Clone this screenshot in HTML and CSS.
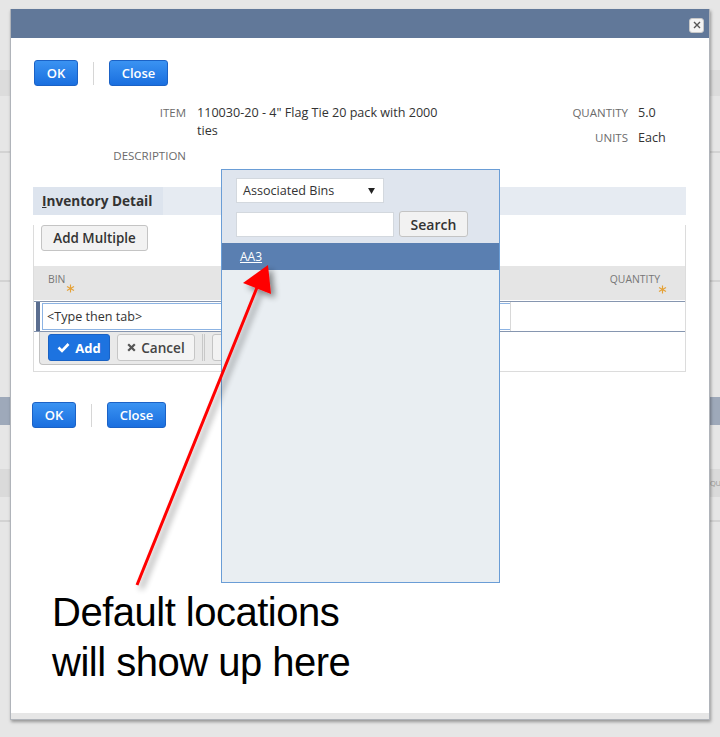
FILE: index.html
```html
<!DOCTYPE html>
<html>
<head>
<meta charset="utf-8">
<title>Inventory Detail</title>
<link rel="stylesheet" href="styles.css">
</head>
<body>
<div class="page">
  <div class="pg-gap h70"></div>
  <div class="pg-band soft h26"></div>
  <div class="pg-gap h55"></div>
  <div class="pg-line"></div>
  <div class="pg-gap h127"></div>
  <div class="pg-line"></div>
  <div class="pg-gap h115"></div>
  <div class="pg-band dark h28"></div>
  <div class="pg-gap h44"></div>
  <div class="pg-band mid h28"><span class="pg-text">QU</span></div>
  <div class="pg-gap h23"></div>
  <div class="pg-line"></div>
</div>

<div class="dialog">
  <div class="dlg-head">
    <span class="dlg-x"><svg width="10" height="10" viewBox="0 0 10 10"><path d="M2 2 L8 8 M8 2 L2 8" stroke="#555" stroke-width="1.4" fill="none"/></svg></span>
  </div>
  <div class="dlg-body">
    <div class="btn-row">
      <button class="btn-blue ok">OK</button>
      <span class="vsep"></span>
      <button class="btn-blue close">Close</button>
    </div>

    <div class="fields">
      <div class="fgroup fleft">
        <span class="lbl">ITEM</span>
        <span class="val">110030-20 - 4" Flag Tie 20 pack with 2000 ties</span>
        <span class="lbl">DESCRIPTION</span>
        <span class="val"></span>
      </div>
      <div class="fgroup fright">
        <span class="lbl">QUANTITY</span>
        <span class="val">5.0</span>
        <span class="lbl">UNITS</span>
        <span class="val">Each</span>
      </div>
    </div>

    <div class="inv">
      <div class="tabs"><div class="tab"><span class="ul">I</span>nventory Detail</div></div>
      <div class="panel">
        <button class="btn-grey addmult">Add Multiple</button>
        <div class="thead">
          <div class="th">BIN<span class="req"><svg width="9" height="9" viewBox="0 0 10 10"><path d="M5 0.5 V9.5 M1.1 2.75 L8.9 7.25 M8.9 2.75 L1.1 7.25" stroke="#e5a238" stroke-width="1.3"/></svg></span></div>
          <div class="th th-qty">QUANTITY<span class="req"><svg width="9" height="9" viewBox="0 0 10 10"><path d="M5 0.5 V9.5 M1.1 2.75 L8.9 7.25 M8.9 2.75 L1.1 7.25" stroke="#e5a238" stroke-width="1.3"/></svg></span></div>
        </div>
        <div class="trow">
          <div class="marker"></div>
          <div class="cell-bin"><div class="bin-input">&lt;Type then tab&gt;</div></div>
          <div class="cell-qty"></div>
        </div>
        <div class="actions">
          <button class="btn-add"><svg width="13" height="11" viewBox="0 0 13 11"><path d="M1.5 5.5 L5 9 L11.5 2" stroke="#fff" stroke-width="2.6" fill="none"/></svg>Add</button>
          <button class="btn-cancel"><svg width="9" height="9" viewBox="0 0 9 9"><path d="M1.2 1.2 L7.8 7.8 M7.8 1.2 L1.2 7.8" stroke="#555" stroke-width="2.2"/></svg>Cancel</button>
          <span class="asep"></span>
          <button class="btn-grey more">Remove</button>
        </div>
      </div>
    </div>

    <div class="btn-row bottom">
      <button class="btn-blue ok">OK</button>
      <span class="vsep"></span>
      <button class="btn-blue close">Close</button>
    </div>
  </div>
  <div class="dlg-foot"></div>

  <div class="popup">
    <div class="pop-top">
      <div class="pop-select"><span>Associated Bins</span><svg width="7" height="6" viewBox="0 0 8 7"><path d="M0 0 H8 L4 7 Z" fill="#222"/></svg></div>
      <div class="pop-search">
        <div class="pop-input"></div>
        <button class="btn-grey search">Search</button>
      </div>
    </div>
    <div class="pop-item"><span>AA3</span></div>
  </div>

  <div class="note">Default locations<br>will show up here</div>
</div>

<svg class="arrow" width="720" height="737" viewBox="0 0 720 737">
  <defs>
    <filter id="sh" x="-50%" y="-50%" width="200%" height="200%">
      <feGaussianBlur in="SourceAlpha" stdDeviation="3"/>
      <feOffset dx="4" dy="4" result="b"/>
      <feComponentTransfer><feFuncA type="linear" slope="0.45"/></feComponentTransfer>
      <feMerge><feMergeNode/><feMergeNode in="SourceGraphic"/></feMerge>
    </filter>
  </defs>
  <g filter="url(#sh)">
    <line x1="137" y1="585" x2="258" y2="285" stroke="#ff0000" stroke-width="3"/>
    <polygon points="268,265 243,283 271,294" fill="#ff0000"/>
  </g>
</svg>
</body>
</html>
```

FILE: styles.css
```css
* { box-sizing: border-box; }
html, body { margin: 0; padding: 0; }
body {
  width: 720px;
  height: 737px;
  overflow: hidden;
  position: relative;
  background: #e6e6e6;
  font-family: "Open Sans", "Noto Sans", sans-serif;
  color: #333;
}
button { font-family: inherit; cursor: pointer; }

/* page behind the dialog */
.page { display: flex; flex-direction: column; }
.pg-gap.h70 { height: 70px; }
.pg-gap.h55 { height: 55px; }
.pg-gap.h127 { height: 127px; }
.pg-gap.h115 { height: 115px; }
.pg-gap.h44 { height: 44px; }
.pg-gap.h23 { height: 23px; }
.pg-band.h26 { height: 26px; }
.pg-band.h28 { height: 28px; }
.pg-band.soft { background: #dcdcdc; }
.pg-band.dark { background: #9ea9ba; }
.pg-band.mid { background: #dadada; padding-left: 710px; overflow: hidden; white-space: nowrap; }
.pg-text { font-size: 7.5px; letter-spacing: -0.4px; color: #999; line-height: 28px; }
.pg-line { height: 2px; background: #d3d3d3; }

/* dialog */
.dialog {
  position: absolute;
  left: 10px;
  top: 9px;
  width: 700px;
  height: 711px;
  background: #fff;
  border: 1px solid #b0b4ba;
  border-top: none;
  box-shadow: 1px 2px 3px rgba(0,0,0,0.35);
  display: flex;
  flex-direction: column;
}
.dlg-head {
  height: 29px;
  background: #617899;
  display: flex;
  justify-content: flex-end;
  align-items: center;
  padding-right: 5px;
  padding-top: 3px;
}
.dlg-x {
  width: 15px;
  height: 15px;
  background: #f4f4f4;
  border: 1px solid #c8c8c8;
  border-radius: 3px;
  display: flex;
  align-items: center;
  justify-content: center;
}
.dlg-body { flex: 1; padding-top: 22px; }
.dlg-foot { height: 6px; background: #e6e6e6; }

.btn-row { display: flex; align-items: center; padding-left: 23px; }
.btn-row.bottom { padding-left: 21px; margin-top: 30px; }
.btn-blue {
  height: 26px;
  border: 1px solid #1b62c6;
  border-radius: 3px;
  background: linear-gradient(#3a93f2, #1a6fdf);
  color: #fff;
  font-weight: 600;
  font-size: 13px;
  padding: 0;
}
.btn-blue.ok { width: 44px; }
.btn-blue.close { width: 59px; }
.vsep { width: 1px; height: 23px; background: #d6d6d6; margin: 0 15px; }

/* fields */
.fields { display: flex; margin-top: 18px; line-height: 18px; }
.fgroup { display: grid; row-gap: 7px; column-gap: 11px; align-content: start; }
.fleft { grid-template-columns: 175px 250px; }
.fright { grid-template-columns: 70px 60px; column-gap: 10px; margin-left: 111px; }
.lbl { text-align: right; color: #6b6b6b; font-size: 11.5px; }
.val { color: #333; min-height: 18px; font-size: 12.6px; }

/* inventory detail */
.inv { margin-left: 22px; width: 653px; margin-top: 22px; }
.tabs { height: 28px; background: #e6ebf2; display: flex; }
.tab {
  width: 130px;
  background: #dde4ee;
  font-weight: 700;
  font-size: 13.6px;
  line-height: 28px;
  padding-left: 9px;
  color: #333;
}
.ul { text-decoration: underline; }
.panel {
  border: 1px solid #dcdcdc;
  border-top: none;
  padding-bottom: 6px;
}
.btn-grey {
  background: #f2f2f2;
  border: 1px solid #c4c4c4;
  border-radius: 3px;
  color: #333;
  font-weight: 600;
  font-size: 14px;
  padding: 0;
}
.addmult { display: block; width: 107px; height: 26px; margin: 10px 0 0 7px; font-size: 13.4px; }
.thead {
  margin-top: 15px;
  height: 34px;
  background: #e5e5e5;
  display: flex;
  justify-content: space-between;
  padding: 7px 25px 0 14px;
}
.th { font-size: 10.4px; color: #777; position: relative; line-height: 13px; }
.req { position: absolute; right: -10px; top: 11px; line-height: 0; }
.th-qty .req { right: -7px; top: 12px; }
.trow {
  height: 31px;
  margin-top: 1px;
  border-top: 1px solid #8696b0;
  border-bottom: 1px solid #8696b0;
  background: #fff;
  display: flex;
}
.marker { width: 4px; margin-left: 2px; background: #5a6d8f; }
.cell-bin { width: 470px; padding: 1px 0 0 2px; }
.bin-input {
  height: 27px;
  border: 1px solid #8cb3e3;
  border-right: none;
  font-size: 12.6px;
  line-height: 25px;
  padding-left: 4px;
  color: #333;
}
.cell-qty { flex: 1; border-left: 1px solid #d8d8d8; }
.actions {
  margin-left: 5px;
  width: 300px;
  height: 33px;
  background: #e9e9e9;
  border: 1px solid #c2c2c2;
  border-top: none;
  border-right: none;
  border-bottom-left-radius: 4px;
  display: flex;
  align-items: flex-start;
  padding: 2px 0 0 8px;
  gap: 7px;
}
.btn-add {
  width: 62px;
  height: 27px;
  background: #1d73e0;
  border: 1px solid #1a62c4;
  border-radius: 3px;
  color: #fff;
  font-weight: 700;
  font-size: 13px;
  display: flex;
  align-items: center;
  justify-content: center;
  gap: 5px;
  padding: 0;
}
.btn-cancel {
  width: 78px;
  height: 27px;
  background: #f4f4f4;
  border: 1px solid #c6c6c6;
  border-radius: 3px;
  color: #444;
  font-weight: 600;
  font-size: 13.6px;
  display: flex;
  align-items: center;
  justify-content: center;
  gap: 5px;
  padding: 0;
}
.asep { width: 3px; height: 27px; border-left: 1px solid #c8c8c8; border-right: 1px solid #c8c8c8; }
.more { width: 70px; height: 27px; font-size: 13px; }

/* popup */
.popup {
  position: absolute;
  left: 210px;
  top: 160px;
  width: 279px;
  height: 414px;
  background: #e9eef2;
  border: 1px solid #6a9dd6;
}
.pop-top { background: #dfe5ee; padding: 8px 0 6px 14px; }
.pop-select {
  width: 148px;
  height: 25px;
  background: #fff;
  border: 1px solid #d3d8de;
  display: flex;
  align-items: center;
  justify-content: space-between;
  padding: 0 8px 0 6px;
  font-size: 12.6px;
  color: #333;
}
.pop-search { display: flex; align-items: center; margin-top: 8px; gap: 5px; }
.pop-input { width: 158px; height: 25px; background: #fff; border: 1px solid #d3d8de; }
.search { width: 69px; height: 26px; font-size: 14px; }
.pop-item {
  height: 27px;
  background: #5a7fb1;
  padding-left: 18px;
  font-size: 12px;
  line-height: 27px;
  color: #fff;
}
.pop-item span { text-decoration: underline; }

/* annotation */
.note {
  position: absolute;
  left: 41px;
  top: 578px;
  font-family: "Liberation Sans", Arial, sans-serif;
  font-size: 40px;
  line-height: 50px;
  letter-spacing: -0.5px;
  color: #000;
}

.arrow { position: absolute; left: 0; top: 0; pointer-events: none; }
```
